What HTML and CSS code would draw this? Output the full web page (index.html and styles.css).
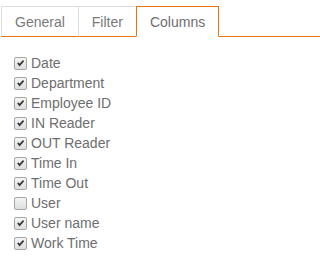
FILE: index.html
```html
<!DOCTYPE html>
<html>
<head>
<meta charset="utf-8">
<link rel="stylesheet" href="styles.css">
</head>
<body>
<div class="panel">
  <div class="tabs">
    <div class="tab">General</div>
    <div class="tab">Filter</div>
    <div class="tab active">Columns</div>
    <div class="tab-rest"></div>
  </div>
  <ul class="cols">
    <li class="opt"><span class="box on"><svg viewBox="0 0 13 13"><path d="M2.6 6.4 L4 5 L5.4 6.8 L9.4 2.4 L10.8 3.8 L5.4 10 Z"/></svg></span>Date</li>
    <li class="opt"><span class="box on"><svg viewBox="0 0 13 13"><path d="M2.6 6.4 L4 5 L5.4 6.8 L9.4 2.4 L10.8 3.8 L5.4 10 Z"/></svg></span>Department</li>
    <li class="opt"><span class="box on"><svg viewBox="0 0 13 13"><path d="M2.6 6.4 L4 5 L5.4 6.8 L9.4 2.4 L10.8 3.8 L5.4 10 Z"/></svg></span>Employee ID</li>
    <li class="opt"><span class="box on"><svg viewBox="0 0 13 13"><path d="M2.6 6.4 L4 5 L5.4 6.8 L9.4 2.4 L10.8 3.8 L5.4 10 Z"/></svg></span>IN Reader</li>
    <li class="opt"><span class="box on"><svg viewBox="0 0 13 13"><path d="M2.6 6.4 L4 5 L5.4 6.8 L9.4 2.4 L10.8 3.8 L5.4 10 Z"/></svg></span>OUT Reader</li>
    <li class="opt"><span class="box on"><svg viewBox="0 0 13 13"><path d="M2.6 6.4 L4 5 L5.4 6.8 L9.4 2.4 L10.8 3.8 L5.4 10 Z"/></svg></span>Time In</li>
    <li class="opt"><span class="box on"><svg viewBox="0 0 13 13"><path d="M2.6 6.4 L4 5 L5.4 6.8 L9.4 2.4 L10.8 3.8 L5.4 10 Z"/></svg></span>Time Out</li>
    <li class="opt"><span class="box"></span>User</li>
    <li class="opt"><span class="box on"><svg viewBox="0 0 13 13"><path d="M2.6 6.4 L4 5 L5.4 6.8 L9.4 2.4 L10.8 3.8 L5.4 10 Z"/></svg></span>User name</li>
    <li class="opt"><span class="box on"><svg viewBox="0 0 13 13"><path d="M2.6 6.4 L4 5 L5.4 6.8 L9.4 2.4 L10.8 3.8 L5.4 10 Z"/></svg></span>Work Time</li>
  </ul>
</div>
</body>
</html>
```

FILE: styles.css
```css
html, body {
  margin: 0;
  padding: 0;
  background: #ffffff;
}
body {
  font-family: "Liberation Sans", Arial, sans-serif;
  font-size: 14px;
  color: #6e6e6e;
}
.panel {
  padding: 6px 0 0 1px;
}
.tabs {
  display: flex;
  align-items: flex-end;
}
.tab {
  line-height: 20px;
  padding: 5px 13px 4px;
  border: 1px solid #dddddd;
  border-bottom: 1px solid #e8740f;
  color: #7a7a7a;
  background: #ffffff;
}
.tab + .tab {
  margin-left: -1px;
}
.tab.active {
  border: 1px solid #e8740f;
  border-bottom-color: #ffffff;
  color: #6e6e6e;
  position: relative;
}
.tab-rest {
  flex: 1;
  border-bottom: 1px solid #e8740f;
}
.cols {
  list-style: none;
  margin: 16px 0 0 0;
  padding: 0 0 0 13px;
}
.opt {
  display: flex;
  align-items: center;
  height: 20px;
  line-height: 20px;
}
.box {
  box-sizing: border-box;
  width: 13px;
  height: 13px;
  margin-right: 4px;
  border: 1px solid #a6a6a6;
  border-radius: 2px;
  background: linear-gradient(#f4f4f4, #dedede);
  display: flex;
}
.box svg {
  width: 11px;
  height: 11px;
}
.box svg path {
  fill: #333333;
}
```
